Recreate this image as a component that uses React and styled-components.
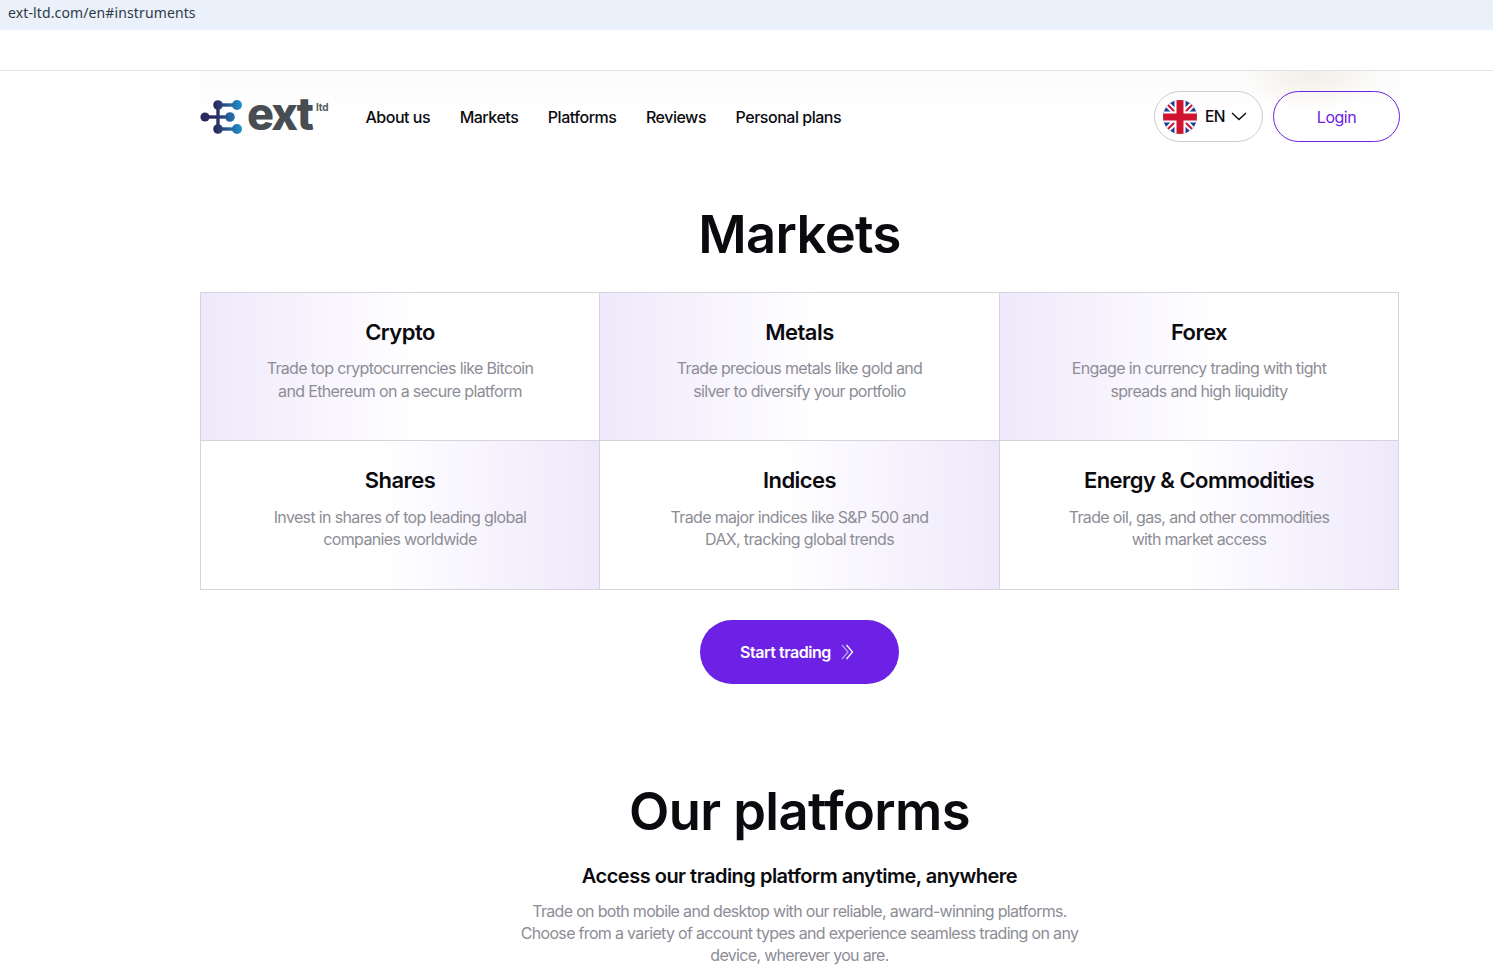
import React from "react";
import styled, { createGlobalStyle } from "styled-components";

const markets = [
  { title: "Crypto", lines: ["Trade top cryptocurrencies like Bitcoin", "and Ethereum on a secure platform"], side: "left" },
  { title: "Metals", lines: ["Trade precious metals like gold and", "silver to diversify your portfolio"], side: "left" },
  { title: "Forex", lines: ["Engage in currency trading with tight", "spreads and high liquidity"], side: "left" },
  { title: "Shares", lines: ["Invest in shares of top leading global", "companies worldwide"], side: "right" },
  { title: "Indices", lines: ["Trade major indices like S&P 500 and", "DAX, tracking global trends"], side: "right" },
  { title: "Energy & Commodities", lines: ["Trade oil, gas, and other commodities", "with market access"], side: "right" },
];

const navItems = ["About us", "Markets", "Platforms", "Reviews", "Personal plans"];

function LogoMark() {
  return (
    <svg width="44" height="36" viewBox="0 0 44 36" fill="none">
      <defs>
        <linearGradient id="mark" x1="0" y1="0" x2="44" y2="0" gradientUnits="userSpaceOnUse">
          <stop offset="0.35" stopColor="#2b2a5e" />
          <stop offset="1" stopColor="#1e9bd7" />
        </linearGradient>
      </defs>
      <g stroke="url(#mark)" strokeWidth="3.4">
        <path d="M5 18H31" />
        <path d="M18 6V30" />
        <path d="M18 6H37" />
        <path d="M18 30H37" />
      </g>
      <g fill="url(#mark)">
        <circle cx="5" cy="18" r="4.6" />
        <circle cx="18" cy="6" r="4.8" />
        <circle cx="18" cy="30" r="4.8" />
        <circle cx="37" cy="6" r="5" />
        <circle cx="37" cy="30" r="5" />
        <circle cx="30" cy="18" r="4.8" />
      </g>
    </svg>
  );
}

function UkFlag() {
  return (
    <svg width="34" height="34" viewBox="0 0 34 34">
      <defs>
        <clipPath id="flagClip">
          <circle cx="17" cy="17" r="17" />
        </clipPath>
      </defs>
      <g clipPath="url(#flagClip)">
        <rect width="34" height="34" fill="#1f3f94" />
        <path d="M0 0L34 34M34 0L0 34" stroke="#fff" strokeWidth="6" />
        <path d="M0 0L34 34M34 0L0 34" stroke="#d0142f" strokeWidth="2" />
        <rect x="11.5" width="11" height="34" fill="#fff" />
        <rect y="11.5" width="34" height="11" fill="#fff" />
        <rect x="13.5" width="7" height="34" fill="#d0142f" />
        <rect y="13.5" width="34" height="7" fill="#d0142f" />
      </g>
    </svg>
  );
}

function App() {
  return (
    <>
      <GlobalStyle />
      <UrlBar>ext-ltd.com/en#instruments</UrlBar>
      <TopStrip />
      <Page>
        <Header>
          <Logo>
            <LogoMark />
            <LogoWord>ext</LogoWord>
            <LogoSup>ltd</LogoSup>
          </Logo>
          <Nav>
            {navItems.map((item) => (
              <NavLink key={item}>{item}</NavLink>
            ))}
          </Nav>
          <HeaderRight>
            <LangButton>
              <UkFlag />
              <LangLabel>EN</LangLabel>
              <svg width="16" height="9" viewBox="0 0 16 9" fill="none">
                <path d="M1 1L8 7.5L15 1" stroke="#111" strokeWidth="1.5" />
              </svg>
            </LangButton>
            <LoginButton>Login</LoginButton>
          </HeaderRight>
        </Header>

        <SectionTitle>Markets</SectionTitle>
        <MarketGrid>
          {markets.map((m) => (
            <MarketCell key={m.title} $side={m.side}>
              <CellTitle>{m.title}</CellTitle>
              <CellText $side={m.side}>
                {m.lines[0]}
                <br />
                {m.lines[1]}
              </CellText>
            </MarketCell>
          ))}
        </MarketGrid>
        <StartRow>
          <StartButton>
            Start trading
            <svg width="13" height="16" viewBox="0 0 13 16" fill="none">
              <path d="M1 1L7 8L1 15" stroke="#b89cf5" strokeWidth="1.3" />
              <path d="M5.5 1L11.5 8L5.5 15" stroke="#fff" strokeWidth="1.3" />
            </svg>
          </StartButton>
        </StartRow>

        <PlatformTitle>Our platforms</PlatformTitle>
        <PlatformSub>Access our trading platform anytime, anywhere</PlatformSub>
        <PlatformText>
          Trade on both mobile and desktop with our reliable, award-winning platforms.
          <br />
          Choose from a variety of account types and experience seamless trading on any
          <br />
          device, wherever you are.
        </PlatformText>
      </Page>
    </>
  );
}

const GlobalStyle = createGlobalStyle`
  html, body {
    margin: 0;
    padding: 0;
    background: #fff;
    height: 972px;
    overflow: hidden;
  }
  body {
    font-family: Inter, "Liberation Sans", sans-serif;
    color: #0b0b0f;
  }
`;

const UrlBar = styled.div`
  height: 30px;
  line-height: 26px;
  padding-left: 8px;
  background: #ebf1fa;
  font-family: "Noto Sans", sans-serif;
  font-size: 14px;
  letter-spacing: 0.12px;
  color: #2e3a46;
`;

const TopStrip = styled.div`
  height: 40px;
  border-bottom: 1px solid #e2e2e2;
`;

const Page = styled.main`
  width: 1200px;
  margin-left: 200px;
  background:
    radial-gradient(ellipse 70px 32px at 1112px 6px, rgba(232, 222, 205, 0.42), transparent),
    linear-gradient(to bottom, #fbfbfb 0, #ffffff 46px) no-repeat;
  background-size: 100% 100%, 100% 60px;
`;

const Header = styled.header`
  display: flex;
  align-items: center;
  height: 51px;
  padding-top: 20px;
`;

const Logo = styled.div`
  display: flex;
  align-items: center;
  width: 165.5px;
  flex-shrink: 0;
`;

const LogoWord = styled.span`
  margin: -5px 0 0 3px;
  font-size: 45px;
  font-weight: 800;
  line-height: 36px;
  letter-spacing: -1.9px;
  color: #474d52;
`;

const LogoSup = styled.span`
  align-self: flex-start;
  margin: 2px 0 0 4px;
  font-size: 10px;
  font-weight: 700;
  color: #555b60;
`;

const Nav = styled.nav`
  display: flex;
  gap: 29.5px;
`;

const NavLink = styled.a`
  font-size: 16px;
  font-weight: 500;
  letter-spacing: -0.48px;
  color: #0b0b0f;
`;

const HeaderRight = styled.div`
  display: flex;
  gap: 10px;
  margin-left: auto;
`;

const LangButton = styled.button`
  display: flex;
  align-items: center;
  gap: 8px;
  width: 109px;
  height: 51px;
  padding: 0 0 0 8px;
  background: transparent;
  border: 1px solid #cccccc;
  border-radius: 26px;
  font: inherit;
`;

const LangLabel = styled.span`
  margin-right: -2px;
  font-size: 15.5px;
  font-weight: 500;
  letter-spacing: -0.5px;
  color: #0b0b0f;
`;

const LoginButton = styled.button`
  width: 127px;
  height: 51px;
  background: transparent;
  border: 1px solid #6c21e4;
  border-radius: 26px;
  font: inherit;
  font-size: 16px;
  letter-spacing: -0.5px;
  color: #6c21e4;
`;

const SectionTitle = styled.h2`
  margin: 0;
  padding: 60px 1px 0 0;
  text-align: center;
  font-size: 52.5px;
  line-height: 65px;
  font-weight: 600;
  letter-spacing: -0.6px;
  color: #0b0b0f;
`;

const MarketGrid = styled.div`
  display: grid;
  grid-template-columns: 399px 400px 399px;
  grid-template-rows: 148px 149px;
  margin-top: 25px;
  width: 1199px;
  border-top: 1px solid #d5d3de;
  border-left: 1px solid #d5d3de;
  box-sizing: border-box;
`;

const MarketCell = styled.div`
  box-sizing: border-box;
  padding-top: 24px;
  text-align: center;
  border-right: 1px solid #d5d3de;
  border-bottom: 1px solid #d5d3de;
  background: ${(p) =>
    p.$side === "left"
      ? "linear-gradient(90deg, #efe8fb 0%, #ffffff 55%)"
      : "linear-gradient(270deg, #efe8fb 0%, #ffffff 55%)"};
`;

const CellTitle = styled.h3`
  margin: 0;
  font-size: 22px;
  line-height: 30px;
  font-weight: 600;
  letter-spacing: -0.55px;
  color: #0b0b0f;
`;

const CellText = styled.p`
  margin: ${(p) => (p.$side === "right" ? "10.5px" : "10px")} 0 0;
  font-size: 16px;
  line-height: 22.5px;
  letter-spacing: -0.65px;
  color: #8d8d96;
`;

const StartRow = styled.div`
  display: flex;
  justify-content: center;
  margin-top: 30px;
  padding-right: 1px;
`;

const StartButton = styled.button`
  display: flex;
  align-items: center;
  justify-content: center;
  gap: 10px;
  width: 199px;
  height: 64px;
  padding: 0 5px 0 0;
  background: #6c21e4;
  border: 0;
  border-radius: 32px;
  font: inherit;
  font-size: 16px;
  font-weight: 600;
  letter-spacing: -0.45px;
  color: #fff;
`;

const PlatformTitle = styled.h2`
  margin: 0;
  padding: 95px 1px 0 0;
  text-align: center;
  font-size: 52.5px;
  line-height: 65px;
  font-weight: 600;
  letter-spacing: -0.6px;
  color: #0b0b0f;
`;

const PlatformSub = styled.h3`
  margin: 17px 0 0;
  padding-right: 1px;
  text-align: center;
  font-size: 20px;
  line-height: 30px;
  font-weight: 600;
  letter-spacing: -0.5px;
  color: #0b0b0f;
`;

const PlatformText = styled.p`
  margin: 9px 0 0;
  padding-right: 1px;
  text-align: center;
  font-size: 16px;
  line-height: 22px;
  letter-spacing: -0.68px;
  color: #8d8d96;
`;

export default App;
